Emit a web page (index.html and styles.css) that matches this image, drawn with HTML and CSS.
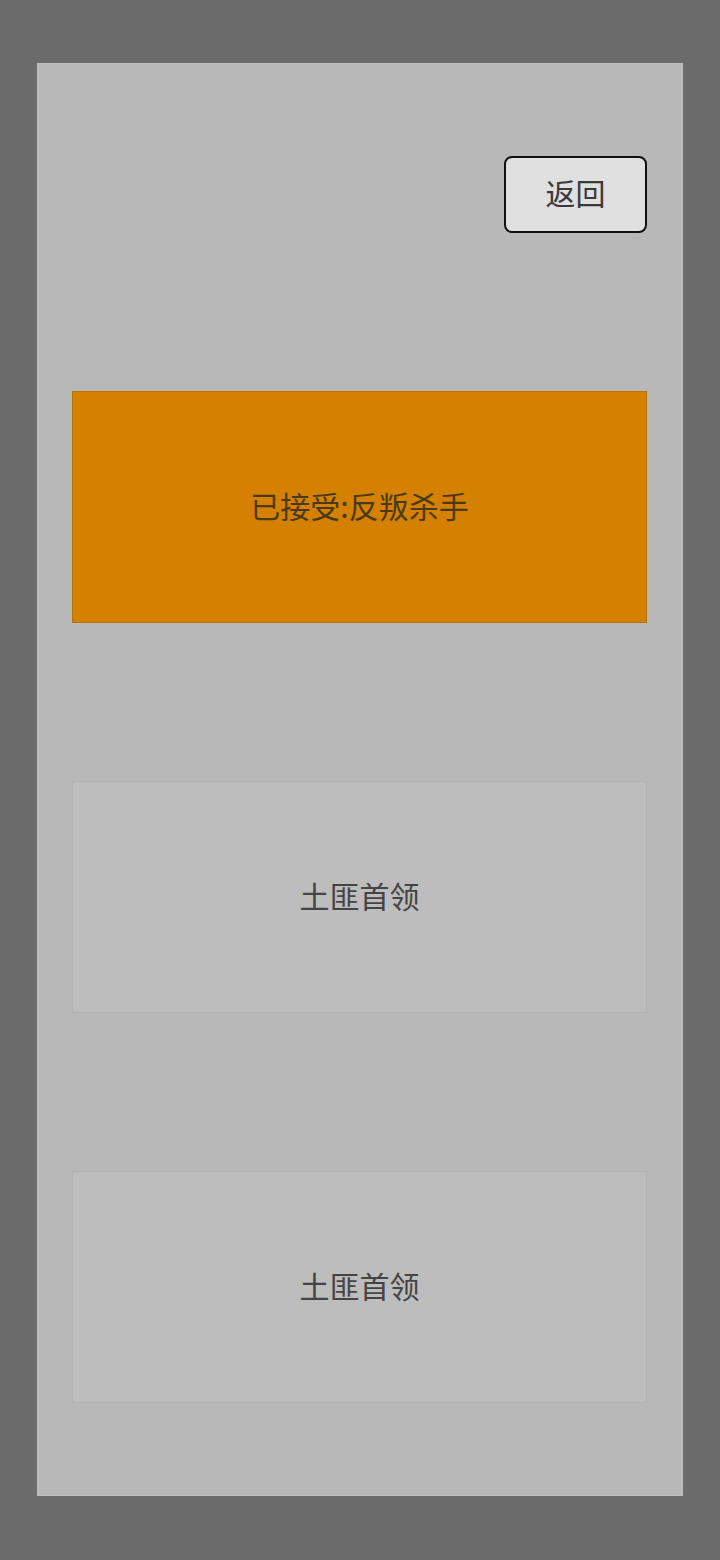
FILE: index.html
```html
<!DOCTYPE html>
<html lang="zh">
<head>
<meta charset="utf-8">
<link rel="stylesheet" href="styles.css">
</head>
<body>
<div class="panel">
  <button class="back">返回</button>
  <div class="list">
    <div class="card card-active">已接受:反叛杀手</div>
    <div class="card">土匪首领</div>
    <div class="card">土匪首领</div>
  </div>
</div>
</body>
</html>
```

FILE: styles.css
```css
html, body {
  margin: 0;
  padding: 0;
}
body {
  background: #6b6b6b;
  width: 720px;
  height: 1560px;
  font-family: "Noto Sans CJK SC", "Noto Sans", sans-serif;
  overflow: hidden;
}
.panel {
  box-sizing: border-box;
  margin: 63px 0 0 37px;
  width: 646px;
  height: 1433px;
  background: #b8b8b8;
  border: 1px solid #bfbfbf;
  padding: 92px 35px 0 34px;
  display: flex;
  flex-direction: column;
}
.back {
  align-self: flex-end;
  box-sizing: border-box;
  width: 143px;
  height: 77px;
  background: #e0e0e0;
  border: 2px solid #111;
  border-radius: 8px;
  font-family: "Noto Sans CJK SC", "Noto Sans", sans-serif;
  font-size: 30px;
  color: #3a3a3a;
  padding: 0 0 6px 0;
}
.list {
  margin-top: 158px;
  display: flex;
  flex-direction: column;
  gap: 158px;
}
.card {
  box-sizing: border-box;
  height: 232px;
  display: flex;
  align-items: center;
  justify-content: center;
  background: #bdbdbd;
  border: 1px solid #b2b2b2;
  font-size: 30px;
  color: #444;
  padding-bottom: 5px;
}
.card-active {
  background: #d48000;
  border-color: #b87200;
  color: #4a3a18;
}
```
